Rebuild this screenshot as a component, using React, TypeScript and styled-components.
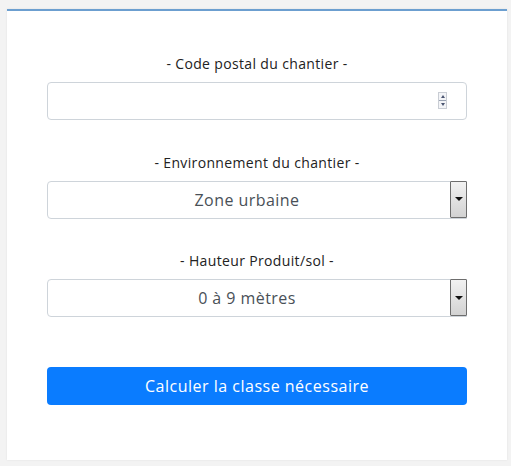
import React from "react";
import styled, { createGlobalStyle } from "styled-components";

const Global = createGlobalStyle`
  html, body { margin: 0; padding: 0; background: #f3f3f3; }
  body { font-family: "Open Sans", "Liberation Sans", sans-serif; }
`;

const Page = styled.div`
  padding: 9px 4px 6px 7px;
`;

const Card = styled.form`
  background: #fff;
  border-top: 2px solid #6c9fd0;
  box-shadow: 0 0 2px rgba(0, 0, 0, 0.08);
  height: 451px;
  box-sizing: border-box;
  padding: 42px 40px 0 40px;
  display: flex;
  flex-direction: column;
`;

const Group = styled.div`
  display: flex;
  flex-direction: column;
  margin-bottom: 31.5px;
`;

const Label = styled.label`
  text-align: center;
  font-size: 14px;
  line-height: 21px;
  letter-spacing: 0.35px;
  color: #222;
  margin-bottom: 8px;
`;

const Field = styled.div`
  position: relative;
  height: 38px;
`;

const NumberInput = styled.input`
  width: 100%;
  height: 38px;
  box-sizing: border-box;
  border: 1px solid #ced4da;
  border-radius: 4px;
  padding: 6px 12px;
  font: inherit;
  font-size: 16px;
  color: #495057;
  background: #fff;
  -moz-appearance: textfield;
  &::-webkit-inner-spin-button,
  &::-webkit-outer-spin-button { -webkit-appearance: none; margin: 0; }
`;

const Spinner = styled.div`
  position: absolute;
  right: 20px;
  top: 10px;
  width: 9px;
  height: 17px;
  display: flex;
  flex-direction: column;
  border: 1px solid #c9cdd4;
  box-sizing: border-box;
  background: #f3f4f7;
`;

const SpinHalf = styled.div<{ $down?: boolean }>`
  flex: 1;
  display: flex;
  align-items: center;
  justify-content: center;
  border-top: ${(p) => (p.$down ? "1px solid #9aa3b3" : "none")};
  &::after {
    content: "";
    border-left: 2px solid transparent;
    border-right: 2px solid transparent;
    ${(p) =>
      p.$down ? "border-top: 3px solid #4a5470;" : "border-bottom: 3px solid #4a5470;"}
  }
`;

const Select = styled.select`
  width: 100%;
  height: 38px;
  box-sizing: border-box;
  border: 1px solid #ced4da;
  border-radius: 4px 0 0 4px;
  padding: 0 20px 0 0;
  font: inherit;
  font-size: 16px;
  letter-spacing: 0.45px;
  color: #495057;
  background: #fff;
  text-align: center;
  text-align-last: center;
  appearance: none;
  -webkit-appearance: none;
`;

const ArrowBox = styled.div`
  position: absolute;
  right: 0;
  top: 0;
  width: 17px;
  height: 37px;
  box-sizing: border-box;
  border: 1px solid #6d6d6d;
  border-radius: 1px;
  background: linear-gradient(to bottom, #f2f2f2, #d2d2d2);
  display: flex;
  align-items: center;
  justify-content: center;
  pointer-events: none;
  &::after {
    content: "";
    border-left: 4px solid transparent;
    border-right: 4px solid transparent;
    border-top: 4px solid #111;
  }
`;

const Button = styled.button`
  margin-top: 18.5px;
  height: 38px;
  width: 100%;
  border: none;
  border-radius: 4px;
  background: #0a7cff;
  color: #fff;
  font: inherit;
  font-size: 16px;
  letter-spacing: 0.5px;
  cursor: pointer;
`;

export default function App() {
  return (
    <Page>
      <Global />
      <Card onSubmit={(e) => e.preventDefault()}>
        <Group>
          <Label>- Code postal du chantier -</Label>
          <Field>
            <NumberInput type="number" />
            <Spinner>
              <SpinHalf />
              <SpinHalf $down />
            </Spinner>
          </Field>
        </Group>
        <Group>
          <Label>- Environnement du chantier -</Label>
          <Field>
            <Select defaultValue="urbaine">
              <option value="urbaine">Zone urbaine</option>
              <option value="rurale">Zone rurale</option>
            </Select>
            <ArrowBox />
          </Field>
        </Group>
        <Group>
          <Label>- Hauteur Produit/sol -</Label>
          <Field>
            <Select defaultValue="0-9">
              <option value="0-9">0 à 9 mètres</option>
              <option value="9-18">9 à 18 mètres</option>
            </Select>
            <ArrowBox />
          </Field>
        </Group>
        <Button type="submit">Calculer la classe nécessaire</Button>
      </Card>
    </Page>
  );
}
